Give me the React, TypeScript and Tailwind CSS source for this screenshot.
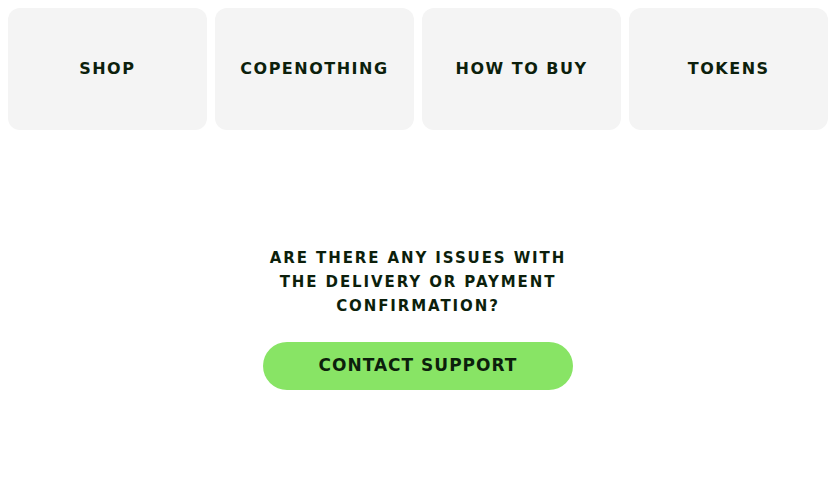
const links = ['SHOP', 'COPENOTHING', 'HOW TO BUY', 'TOKENS']

function App() {
    return (
        <div className="min-h-screen bg-white p-2 text-[#0c1f0c]" style={{ fontFamily: '"DejaVu Sans", sans-serif' }}>
            <div className="grid grid-cols-4 gap-[8.5px]">
                {links.map((l) => (
                    <div key={l} className="flex h-[122px] items-center justify-center rounded-xl bg-[#f4f4f4]">
                        <span className="text-[16px] font-bold tracking-[1.5px]">{l}</span>
                    </div>
                ))}
            </div>

            <div className="mt-[116px] flex flex-col items-center">
                <h2 className="w-[310px] text-center text-[15px] font-bold leading-6 tracking-[1.9px]">
                    ARE THERE ANY ISSUES WITH THE DELIVERY OR PAYMENT CONFIRMATION?
                </h2>
                <button className="mt-[24px] h-12 w-[310px] rounded-full bg-[#88e465] text-[17px] font-bold tracking-[1px]">
                    CONTACT SUPPORT
                </button>
            </div>
        </div>
    )
}

export default App
